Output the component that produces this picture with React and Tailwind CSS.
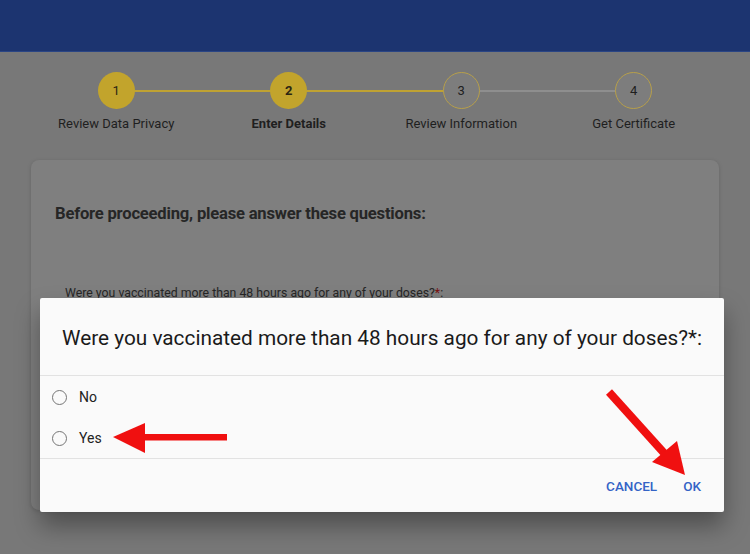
export default function App() {
  const steps = [
    { n: 1, label: "Review Data Privacy", done: true },
    { n: 2, label: "Enter Details", active: true, done: true },
    { n: 3, label: "Review Information" },
    { n: 4, label: "Get Certificate" },
  ];

  return (
    <div className="relative w-[750px] h-[554px] overflow-hidden bg-[#787878] font-['Roboto',sans-serif]">
      {/* Header */}
      <header className="h-[52px] bg-[#1c3470] border-b border-[#2a4584]" />

      {/* Stepper */}
      <div className="mx-[30px] mt-[20px] grid grid-cols-4">
        {steps.map((s, i) => (
          <div key={s.n} className="relative flex flex-col items-center">
            {i > 0 && (
              <div
                className={`absolute top-[18px] right-1/2 w-full h-[1.5px] ${
                  s.n <= 3 ? "bg-[#bfa233]" : "bg-[#8e8e8e]"
                }`}
              />
            )}
            <div
              className={`relative z-10 w-[37px] h-[37px] rounded-full flex items-center justify-center text-[13px] ${
                s.done
                  ? "bg-[#c2a42c] text-[#2b2513]"
                  : "bg-[#7d7d7d] border border-[#b79f4a] text-[#1e1e1e]"
              } ${s.active ? "font-bold" : ""}`}
            >
              {s.n}
            </div>
            <div
              className={`mt-[5px] text-[13px] leading-[20px] text-[#1f1f1f] ${
                s.active ? "font-bold" : ""
              }`}
            >
              {s.label}
            </div>
          </div>
        ))}
      </div>

      {/* Card behind the dialog */}
      <div className="mx-[31px] mt-[26px] h-[350px] rounded-[8px] bg-[#7f7f7f] shadow-[0_1px_4px_rgba(0,0,0,0.15)] pl-[24px] pt-[42px]">
        <h2 className="text-[16.6px] leading-[24px] font-bold text-[#262626] tracking-[-0.2px]">
          Before proceeding, please answer these questions:
        </h2>
        <p className="mt-[58px] ml-[10px] text-[13.5px] leading-[16px] text-[#262626] scale-x-[0.91] origin-left whitespace-nowrap">
          Were you vaccinated more than 48 hours ago for any of your doses?
          <span className="text-[#7a1010]">*</span>:
        </p>
      </div>

      {/* Dialog */}
      <div className="absolute left-[40px] top-[298px] w-[684px] bg-[#fafafa] rounded-[2px] shadow-[0_14px_24px_rgba(0,0,0,0.35)]">
        <div className="h-[78px] pl-[22px] pt-[26px] border-b border-[#e2e2e2]">
          <h3 className="text-[20.8px] leading-[28px] text-[#1a1a1a] whitespace-nowrap">
            Were you vaccinated more than 48 hours ago for any of your doses?*:
          </h3>
        </div>
        <div className="h-[83px] border-b border-[#e2e2e2]">
          {["No", "Yes"].map((o) => (
            <label key={o} className="h-[41px] flex items-center pl-[12px] pt-[2px]">
              <span className="w-[15px] h-[15px] rounded-full border-[1.5px] border-[#757575]" />
              <span className="ml-[12px] text-[14px] text-[#222]">{o}</span>
            </label>
          ))}
        </div>
        <div className="h-[53px] flex items-center justify-end pr-[23px] pt-[2px] gap-[26px] text-[13.5px] font-medium text-[#3463c6]">
          <button>CANCEL</button>
          <button>OK</button>
        </div>
      </div>

      {/* Annotation arrows */}
      <svg className="absolute inset-0 pointer-events-none" width="750" height="554" viewBox="0 0 750 554">
        <rect x="140" y="434" width="87" height="6.5" fill="#f01010" />
        <polygon points="113,437 145,423 145,453" fill="#f01010" />
        <line x1="609" y1="392" x2="664" y2="453" stroke="#f01010" strokeWidth="8" />
        <polygon points="685,475 652,462 677,441" fill="#f01010" />
      </svg>
    </div>
  );
}
